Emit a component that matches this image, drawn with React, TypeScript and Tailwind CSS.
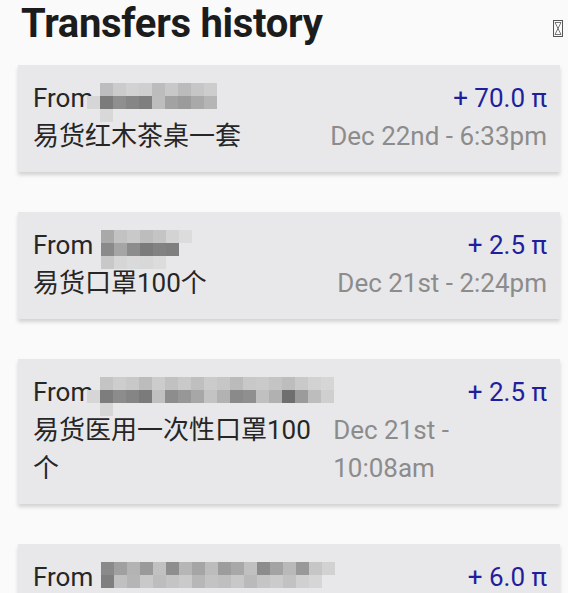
type Cell = string | null

type Transfer = {
  amount: string
  note: string
  date: string
  blur: { offset: number; width: number; cells: Cell[][] }
}

const transfers: Transfer[] = [
  {
    amount: '+ 70.0 π',
    note: '易货红木茶桌一套',
    date: 'Dec 22nd - 6:33pm',
    blur: {
      offset: -6,
      width: 126,
      cells: [
        [null, '#bdbdbd', '#cbcbcb', '#d2d2d2', '#cfcfcf', '#bcbcbc', '#c8c8c8', '#bbbbbb', '#c6c6c6', '#cdcdcd'],
        ['#d6d6d6', '#7b7b7b', '#8f8f8f', '#868686', '#7f7f7f', '#bdbdbd', '#a2a2a2', '#9b9b9b', '#a9a9a9', '#b5b5b5'],
        [null, '#d8d8d8', null, null, null, null, null, null, null, null],
      ],
    },
  },
  {
    amount: '+ 2.5 π',
    note: '易货口罩100个',
    date: 'Dec 21st - 2:24pm',
    blur: {
      offset: 8,
      width: 92,
      cells: [
        ['#a9a9a9', '#c2c2c2', '#c9c9c9', '#bdbdbd', '#c4c4c4', '#d3d3d3', '#dcdcdc'],
        ['#8a8a8a', '#a5a5a5', '#8c8c8c', '#7b7b7b', '#828282', '#7f7f7f', null],
        ['#c8c8c8', '#d6d6d6', '#dadada', '#d8d8d8', '#dcdcdc', null, null],
      ],
    },
  },
  {
    amount: '+ 2.5 π',
    note: '易货医用一次性口罩100个',
    date: 'Dec 21st - 10:08am',
    blur: {
      offset: -6,
      width: 248,
      cells: [
        [null, '#c4c4c4', '#cdcdcd', '#c8c8c8', '#bcbcbc', '#cccccc', '#c1c1c1', '#c9c9c9', '#bfbfbf', '#cbcbcb', '#c6c6c6', '#bbbbbb', '#c8c8c8', '#cacaca', '#c4c4c4', '#bdbdbd', '#c9c9c9', '#d2d2d2', '#d6d6d6'],
        ['#d6d6d6', '#7d7d7d', '#8c8c8c', '#858585', '#7b7b7b', '#c0c0c0', '#8d8d8d', '#979797', '#a7a7a7', '#c3c3c3', '#b2b2b2', '#8a8a8a', '#8f8f8f', '#c0c0c0', '#b1b1b1', '#6f6f6f', '#9b9b9b', '#bdbdbd', '#cfcfcf'],
        [null, '#d6d6d6', null, null, null, null, null, null, null, null, null, null, null, null, null, null, null, null, null],
      ],
    },
  },
  {
    amount: '+ 6.0 π',
    note: '易货',
    date: 'Dec 20th - 9:12pm',
    blur: {
      offset: 8,
      width: 238,
      cells: [
        ['#8a8a8a', '#a0a0a0', '#b3b3b3', '#9a9a9a', '#c1c1c1', '#8e8e8e', '#b6b6b6', '#a5a5a5', '#bcbcbc', '#9d9d9d', '#a8a8a8', '#c0c0c0', '#8c8c8c', '#a3a3a3', '#b9b9b9', '#999999', '#c6c6c6', '#d2d2d2'],
        ['#7f7f7f', '#c0c0c0', '#b5b5b5', '#c9c9c9', '#bdbdbd', '#c4c4c4', '#cacaca', '#b7b7b7', '#c3c3c3', '#bfbfbf', '#c8c8c8', '#bababa', '#c5c5c5', '#cbcbcb', '#c2c2c2', '#d0d0d0', '#d6d6d6', null],
      ],
    },
  },
]

function Mosaic({ offset, width, cells }: { offset: number; width: number; cells: Cell[][] }) {
  return (
    <span className="relative inline-block h-[26px] align-middle" style={{ width, marginLeft: offset }}>
      <span className="absolute left-0 top-[-2px] flex flex-col">
        {cells.map((row, r) => (
          <span key={r} className="flex">
            {row.map((c, i) => (
              <span
                key={i}
                className="h-[13px] w-[13px]"
                style={{ backgroundColor: c ?? 'transparent' }}
              />
            ))}
          </span>
        ))}
      </span>
    </span>
  )
}

function Tofu() {
  return (
    <svg width="10" height="17" viewBox="0 0 10 17" className="text-[#555]">
      <rect x="0.5" y="0.5" width="9" height="16" fill="none" stroke="currentColor" strokeWidth="1" />
      <path d="M2 2.5 L8 2.5 L2 14.5 L8 14.5 Z" fill="none" stroke="currentColor" strokeWidth="0.8" />
    </svg>
  )
}

function TransferCard({ t }: { t: Transfer }) {
  return (
    <div className="ml-[18px] mr-[8px] bg-[#e8e8ea] pb-[17px] pl-[15px] pr-[13px] pt-[14px] shadow-[0_3px_4px_rgba(0,0,0,0.16)]">
      <div className="flex items-center justify-between leading-[38px]">
        <div className="flex items-center text-[#262626]">
          <span>From</span>
          <Mosaic offset={t.blur.offset} width={t.blur.width} cells={t.blur.cells} />
        </div>
        <span className="text-[#1f1f9e]">{t.amount}</span>
      </div>
      <div className="flex justify-between gap-[10px] leading-[38px]">
        <span className="text-[#262626]">{t.note}</span>
        <span className="text-[#8c8c8c]">{t.date}</span>
      </div>
    </div>
  )
}

export default function App() {
  return (
    <div
      className="h-[593px] overflow-hidden bg-[#fafafa] text-[26px]"
      style={{ fontFamily: 'Roboto, "Noto Sans CJK SC", sans-serif' }}
    >
      <div className="flex items-start justify-between pl-[21px] pr-[5px]">
        <h1 className="text-[40px] font-bold leading-[48px] tracking-[-0.3px] text-[#1c1c1c]">Transfers history</h1>
        <div className="pt-[20px]">
          <Tofu />
        </div>
      </div>
      <div className="mt-[17px] flex flex-col gap-[40px]">
        {transfers.map((t, i) => (
          <TransferCard key={i} t={t} />
        ))}
      </div>
    </div>
  )
}
